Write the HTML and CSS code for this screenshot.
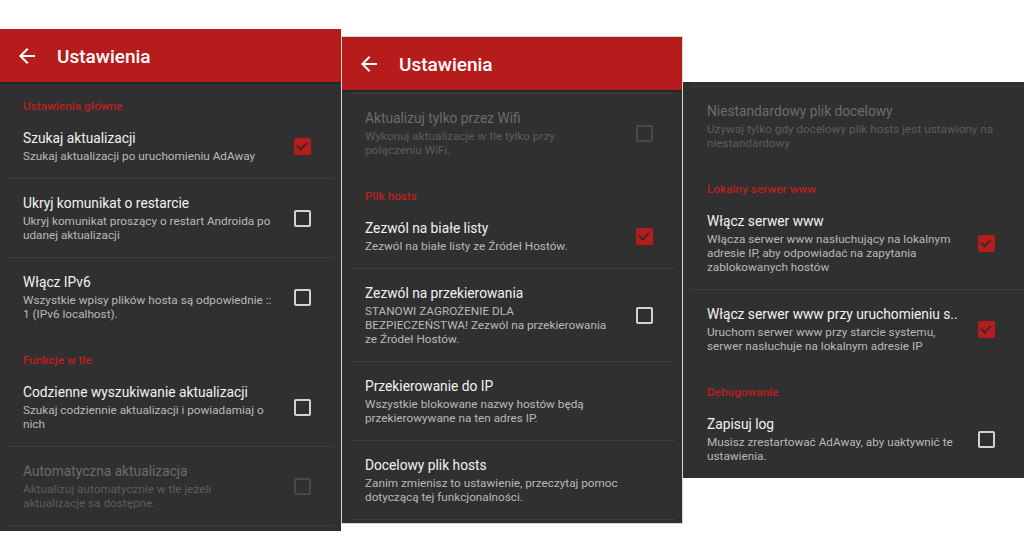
FILE: index.html
```html
<!DOCTYPE html>
<html lang="pl">
<head>
<meta charset="utf-8">
<title>AdAway – Ustawienia</title>
<link rel="stylesheet" href="styles.css">
</head>
<body>
<div class="stage">

  <section class="phone phone--one">
    <header class="toolbar">
      <svg class="toolbar__back" viewBox="0 0 24 24" width="24" height="24"><path d="M20 11H7.83l5.59-5.59L12 4l-8 8 8 8 1.41-1.41L7.83 13H20v-2z" fill="#fff"/></svg>
      <h1 class="toolbar__title">Ustawienia</h1>
    </header>
    <div class="list">
      <div class="category">Ustawienia główne</div>
      <div class="pref">
        <div class="pref__text"><div class="pref__title">Szukaj aktualizacji</div><div class="pref__summary">Szukaj aktualizacji po uruchomieniu AdAway</div></div>
        <span class="check check--on"></span>
      </div>
      <div class="divider"></div>
      <div class="pref">
        <div class="pref__text"><div class="pref__title">Ukryj komunikat o restarcie</div><div class="pref__summary">Ukryj komunikat proszący o restart Androida po udanej aktualizacji</div></div>
        <span class="check"></span>
      </div>
      <div class="divider"></div>
      <div class="pref">
        <div class="pref__text"><div class="pref__title">Włącz IPv6</div><div class="pref__summary">Wszystkie wpisy plików hosta są odpowiednie :: 1 (IPv6 localhost).</div></div>
        <span class="check"></span>
      </div>
      <div class="category">Funkcje w tle</div>
      <div class="pref">
        <div class="pref__text"><div class="pref__title">Codzienne wyszukiwanie aktualizacji</div><div class="pref__summary">Szukaj codziennie aktualizacji i powiadamiaj o nich</div></div>
        <span class="check"></span>
      </div>
      <div class="divider"></div>
      <div class="pref pref--disabled">
        <div class="pref__text"><div class="pref__title">Automatyczna aktualizacja</div><div class="pref__summary">Aktualizuj automatycznie w tle jeżeli aktualizacje sa dostępne.</div></div>
        <span class="check"></span>
      </div>
      <div class="divider"></div>
    </div>
  </section>

  <section class="phone phone--two">
    <header class="toolbar">
      <svg class="toolbar__back" viewBox="0 0 24 24" width="24" height="24"><path d="M20 11H7.83l5.59-5.59L12 4l-8 8 8 8 1.41-1.41L7.83 13H20v-2z" fill="#fff"/></svg>
      <h1 class="toolbar__title">Ustawienia</h1>
    </header>
    <div class="list list--scrolled">
      <div class="divider"></div>
      <div class="pref pref--disabled">
        <div class="pref__text"><div class="pref__title">Aktualizuj tylko przez Wifi</div><div class="pref__summary">Wykonuj aktualizacje w tle tylko przy<br>połączeniu WiFi.</div></div>
        <span class="check"></span>
      </div>
      <div class="category">Plik hosts</div>
      <div class="pref">
        <div class="pref__text"><div class="pref__title">Zezwól na białe listy</div><div class="pref__summary">Zezwól na białe listy ze Źródeł Hostów.</div></div>
        <span class="check check--on"></span>
      </div>
      <div class="divider"></div>
      <div class="pref">
        <div class="pref__text"><div class="pref__title">Zezwól na przekierowania</div><div class="pref__summary">STANOWI ZAGROŻENIE DLA BEZPIECZEŃSTWA! Zezwól na przekierowania ze Źródeł Hostów.</div></div>
        <span class="check"></span>
      </div>
      <div class="divider"></div>
      <div class="pref pref--plain">
        <div class="pref__text"><div class="pref__title">Przekierowanie do IP</div><div class="pref__summary">Wszystkie blokowane nazwy hostów będą przekierowywane na ten adres IP.</div></div>
      </div>
      <div class="divider"></div>
      <div class="pref pref--plain">
        <div class="pref__text"><div class="pref__title">Docelowy plik hosts</div><div class="pref__summary">Zanim zmienisz to ustawienie, przeczytaj pomoc dotyczącą tej funkcjonalności.</div></div>
      </div>
      <div class="divider"></div>
    </div>
  </section>

  <section class="phone phone--three">
    <div class="list list--top">
      <div class="divider"></div>
      <div class="pref pref--plain pref--disabled">
        <div class="pref__text"><div class="pref__title">Niestandardowy plik docelowy</div><div class="pref__summary">Używaj tylko gdy docelowy plik hosts jest ustawiony na niestandardowy</div></div>
      </div>
      <div class="category">Lokalny serwer www</div>
      <div class="pref">
        <div class="pref__text"><div class="pref__title">Włącz serwer www</div><div class="pref__summary">Włącza serwer www nasłuchujący na lokalnym adresie IP, aby odpowiadać na zapytania zablokowanych hostów</div></div>
        <span class="check check--on"></span>
      </div>
      <div class="divider"></div>
      <div class="pref">
        <div class="pref__text"><div class="pref__title">Włącz serwer www przy uruchomieniu s..</div><div class="pref__summary">Uruchom serwer www przy starcie systemu, serwer nasłuchuje na lokalnym adresie IP</div></div>
        <span class="check check--on"></span>
      </div>
      <div class="category">Debugowanie</div>
      <div class="pref">
        <div class="pref__text"><div class="pref__title">Zapisuj log</div><div class="pref__summary">Musisz zrestartować AdAway, aby uaktywnić te ustawienia.</div></div>
        <span class="check"></span>
      </div>
    </div>
  </section>

</div>
</body>
</html>
```

FILE: styles.css
```css
html, body {
  margin: 0;
  padding: 0;
  background: #ffffff;
  overflow: hidden;
}

body {
  font-family: Roboto, "Noto Sans", "Liberation Sans", sans-serif;
  width: 1024px;
  height: 560px;
}

.stage {
  display: flex;
  align-items: flex-start;
}

.phone {
  background: #303030;
  overflow: hidden;
  flex: none;
}

.phone--one {
  width: 341px;
  height: 502px;
  margin-top: 29px;
}

.phone--two {
  width: 340px;
  height: 486px;
  margin-top: 36px;
  border: 1px solid #d4d4d4;
}

.phone--three {
  flex: 1;
  height: 396px;
  margin-top: 82px;
}

.toolbar {
  height: 53px;
  background: #b71c1c;
  display: flex;
  align-items: center;
  padding-left: 15px;
  gap: 18px;
  box-shadow: 0 1px 2px rgba(0, 0, 0, 0.35);
}

.toolbar__back {
  display: block;
  flex: none;
}

.toolbar__title {
  margin: 2px 0 0;
  font-size: 19px;
  font-weight: 500;
  color: #ffffff;
  line-height: 24px;
}

.list--scrolled {
  padding-top: 3px;
}

.list--top {
  padding-top: 4px;
}

.category {
  padding: 17px 0 1px 23px;
  font-size: 11.8px;
  line-height: 14px;
  font-weight: 500;
  color: #bd1f1f;
}

.phone--three .category,
.phone--three .pref {
  padding-left: 24px;
}

.pref {
  display: flex;
  align-items: center;
  padding: 15px 0 15px 23px;
}

.pref__text {
  flex: 0 0 253px;
  min-width: 0;
}

.pref--plain .pref__text {
  flex: 1 1 auto;
  padding-right: 16px;
}

.pref__title {
  font-size: 13.75px;
  line-height: 18px;
  color: #f2f2f2;
  white-space: nowrap;
}

.pref__summary {
  margin-top: 2px;
  font-size: 11.75px;
  line-height: 14px;
  color: #b9b9b9;
}

.pref--disabled .pref__title {
  color: #6c6c6c;
}

.pref--disabled .pref__summary {
  color: #5d5d5d;
}

.check {
  flex: none;
  width: 13px;
  height: 13px;
  margin-left: 18px;
  border: 2px solid #d2d2d2;
  border-radius: 2px;
  position: relative;
}

.pref--disabled .check {
  border-color: #484848;
}

.check--on {
  background: #b71c1c;
  border-color: #b71c1c;
}

.check--on::after {
  content: "";
  position: absolute;
  left: 3px;
  top: 0px;
  width: 4px;
  height: 8px;
  border: solid #3a2a2a;
  border-width: 0 2px 2px 0;
  transform: rotate(45deg);
}

.divider {
  height: 1px;
  background: #3e3e3e;
  margin: 0 7px 0 8px;
}

.phone--three .divider {
  margin-right: 0;
}
```
